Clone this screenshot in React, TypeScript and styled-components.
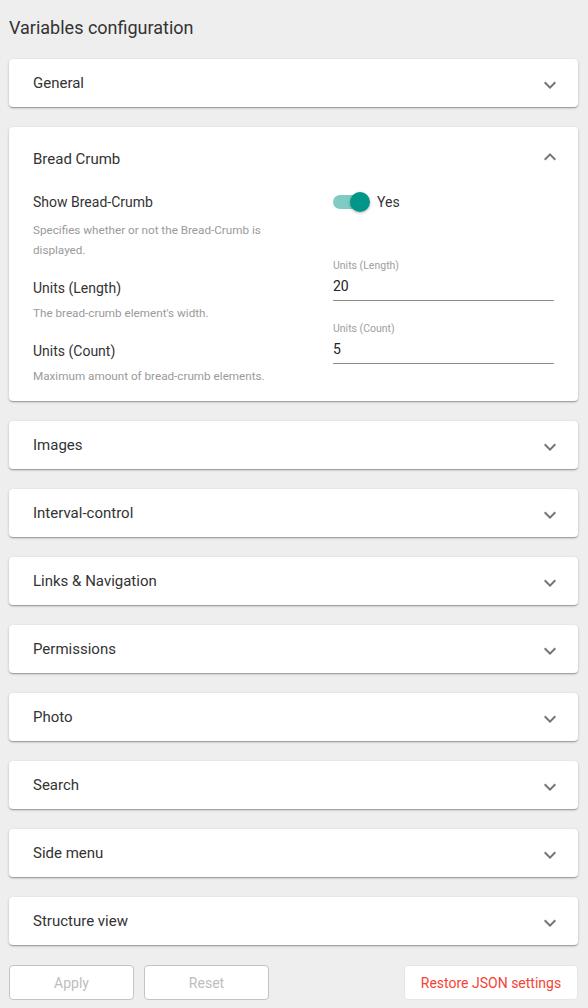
import React from "react";
import styled, { createGlobalStyle } from "styled-components";

const Global = createGlobalStyle`
  html, body { margin: 0; padding: 0; background: #eeeeee; }
  body { font-family: Roboto, "Liberation Sans", Arial, sans-serif; color: #333; }
  * { box-sizing: border-box; }
`;

const Page = styled.div`
  padding: 15px 10px 8px 9px;
  display: flex;
  flex-direction: column;
`;

const Title = styled.h1`
  margin: 0 0 18px 0;
  font-size: 18px;
  font-weight: 400;
  line-height: 26px;
  color: #333;
`;

const List = styled.div`
  display: flex;
  flex-direction: column;
  gap: 20px;
`;

const Card = styled.div`
  background: #fff;
  border-radius: 4px;
  box-shadow: 0 1px 3px rgba(0, 0, 0, 0.2), 0 1px 1px rgba(0, 0, 0, 0.14), 0 2px 1px -1px rgba(0, 0, 0, 0.12);
`;

const Summary = styled.div<{ $expanded?: boolean }>`
  height: ${(p) => (p.$expanded ? 64 : 48)}px;
  display: flex;
  align-items: center;
  justify-content: space-between;
  padding: 0 16px 0 24px;
`;

const SummaryTitle = styled.span`
  font-size: 15px;
  color: #333;
`;

const Chevron = styled.svg<{ $up?: boolean }>`
  width: 24px;
  height: 24px;
  fill: #757575;
  margin-top: 4px;
  transform: ${(p) => (p.$up ? "rotate(180deg)" : "none")};
  ${(p) => (p.$up ? "margin-top: -4px;" : "")}
`;

const Details = styled.div`
  padding: 0 24px 15px 24px;
  display: flex;
  flex-direction: column;
  gap: 17px;
`;

const Row = styled.div`
  display: grid;
  grid-template-columns: 300px 1fr;
  align-items: start;
`;

const Info = styled.div<{ $descGap?: number }>`
  display: flex;
  flex-direction: column;
  gap: ${(p) => p.$descGap ?? 4}px;
`;

const Label = styled.div`
  font-size: 14px;
  line-height: 22px;
  color: #333;
`;

const Desc = styled.div`
  font-size: 11.7px;
  line-height: 20px;
  color: #9a9a9a;
  max-width: 250px;
`;

const SwitchWrap = styled.div`
  display: flex;
  align-items: center;
  gap: 8px;
  height: 22px;
`;

const Track = styled.div`
  position: relative;
  width: 36px;
  height: 14px;
  border-radius: 7px;
  background: #80cbc4;
`;

const Thumb = styled.div`
  position: absolute;
  right: -1px;
  top: -3px;
  width: 20px;
  height: 20px;
  border-radius: 50%;
  background: #009688;
  box-shadow: 0 1px 3px rgba(0, 0, 0, 0.3);
`;

const SwitchText = styled.span`
  font-size: 14px;
  color: #333;
`;

const Field = styled.div`
  margin-top: -18px;
  border-bottom: 1px solid #8a8a8a;
  padding-bottom: 2px;
  display: flex;
  flex-direction: column;
  width: 221px;
`;

const FieldLabel = styled.span`
  font-size: 10.5px;
  line-height: 14px;
  color: #9e9e9e;
`;

const FieldValue = styled.span`
  font-size: 14px;
  line-height: 24px;
  padding-top: 1px;
  color: #222;
`;

const Footer = styled.div`
  margin-top: 20px;
  display: flex;
  align-items: center;
  gap: 10px;
`;

const Button = styled.button<{ $variant?: "disabled" | "danger"; $w: number }>`
  width: ${(p) => p.$w}px;
  height: 35px;
  background: #fff;
  border-radius: 4px;
  font-family: inherit;
  font-size: 14px;
  border: 1px solid ${(p) => (p.$variant === "danger" ? "#e6e6e6" : "#c4c4c4")};
  color: ${(p) => (p.$variant === "danger" ? "#f44336" : "#bdbdbd")};
  padding: 0;
`;

const Spacer = styled.div`
  flex: 1;
`;

const ExpandIcon = ({ up }: { up?: boolean }) => (
  <Chevron $up={up} viewBox="0 0 24 24">
    <path d="M16.59 8.59 12 13.17 7.41 8.59 6 10l6 6 6-6z" />
  </Chevron>
);

const collapsed = [
  "Images",
  "Interval-control",
  "Links & Navigation",
  "Permissions",
  "Photo",
  "Search",
  "Side menu",
  "Structure view",
];

export default function App() {
  return (
    <>
      <Global />
      <Page>
        <Title>Variables configuration</Title>
        <List>
          <Card>
            <Summary>
              <SummaryTitle>General</SummaryTitle>
              <ExpandIcon />
            </Summary>
          </Card>
          <Card>
            <Summary $expanded>
              <SummaryTitle>Bread Crumb</SummaryTitle>
              <ExpandIcon up />
            </Summary>
            <Details>
              <Row>
                <Info $descGap={7}>
                  <Label>Show Bread-Crumb</Label>
                  <Desc>Specifies whether or not the Bread-Crumb is displayed.</Desc>
                </Info>
                <SwitchWrap>
                  <Track>
                    <Thumb />
                  </Track>
                  <SwitchText>Yes</SwitchText>
                </SwitchWrap>
              </Row>
              <Row>
                <Info>
                  <Label>Units (Length)</Label>
                  <Desc>The bread-crumb element's width.</Desc>
                </Info>
                <Field>
                  <FieldLabel>Units (Length)</FieldLabel>
                  <FieldValue>20</FieldValue>
                </Field>
              </Row>
              <Row>
                <Info>
                  <Label>Units (Count)</Label>
                  <Desc>Maximum amount of bread-crumb elements.</Desc>
                </Info>
                <Field>
                  <FieldLabel>Units (Count)</FieldLabel>
                  <FieldValue>5</FieldValue>
                </Field>
              </Row>
            </Details>
          </Card>
          {collapsed.map((t) => (
            <Card key={t}>
              <Summary>
                <SummaryTitle>{t}</SummaryTitle>
                <ExpandIcon />
              </Summary>
            </Card>
          ))}
        </List>
        <Footer>
          <Button $variant="disabled" $w={125}>Apply</Button>
          <Button $variant="disabled" $w={125}>Reset</Button>
          <Spacer />
          <Button $variant="danger" $w={174}>Restore JSON settings</Button>
        </Footer>
      </Page>
    </>
  );
}
